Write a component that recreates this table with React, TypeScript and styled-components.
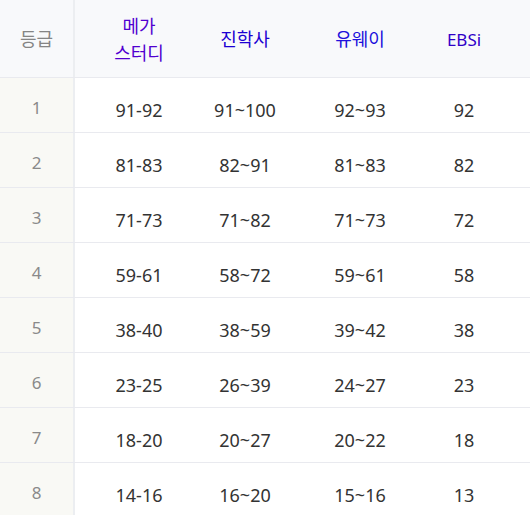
import React from 'react';
import styled, { createGlobalStyle } from 'styled-components';

const GlobalStyle = createGlobalStyle`
  html, body {
    margin: 0;
    padding: 0;
    background: #ffffff;
  }
  body {
    font-family: "Noto Sans", "Noto Sans CJK KR", sans-serif;
    overflow: hidden;
  }
`;

type Source = { name: string[]; color: string; size?: number };

const sources: Source[] = [
  { name: ['메가', '스터디'], color: '#5000d0' },
  { name: ['진학사'], color: '#1c00d2' },
  { name: ['유웨이'], color: '#2010dc' },
  { name: ['EBSi'], color: '#3000c8', size: 17 },
];

const rows: string[][] = [
  ['91-92', '91~100', '92~93', '92'],
  ['81-83', '82~91', '81~83', '82'],
  ['71-73', '71~82', '71~73', '72'],
  ['59-61', '58~72', '59~61', '58'],
  ['38-40', '38~59', '39~42', '38'],
  ['23-25', '26~39', '24~27', '23'],
  ['18-20', '20~27', '20~22', '18'],
  ['14-16', '16~20', '15~16', '13'],
];

const App = () => {
  return (
    <>
      <GlobalStyle />
      <Table>
        <HeadRow>
          <GradeHead>등급</GradeHead>
          {sources.map((s) => (
            <SourceHead key={s.name.join('')} $color={s.color} $size={s.size}>
              {s.name.map((line) => (
                <span key={line}>{line}</span>
              ))}
            </SourceHead>
          ))}
          <Filler />
        </HeadRow>
        {rows.map((cells, i) => (
          <BodyRow key={i}>
            <GradeCell>
              <span>{i + 1}</span>
            </GradeCell>
            {cells.map((c, j) => (
              <ValueCell key={j}>{c}</ValueCell>
            ))}
            <Filler />
          </BodyRow>
        ))}
      </Table>
    </>
  );
};

const Table = styled.div`
  width: 530px;
  display: flex;
  flex-direction: column;
`;

const columns = '75px 128px 84px 146px 62px 1fr';

const HeadRow = styled.div`
  display: grid;
  grid-template-columns: ${columns};
  height: 78px;
  background: #f8f9fb;
  border-bottom: 1px solid #e9eaef;
  box-sizing: border-box;
`;

const BodyRow = styled.div`
  display: grid;
  grid-template-columns: ${columns};
  height: 55px;
  border-bottom: 1px solid #e9eaef;
  box-sizing: border-box;
`;

const GradeHead = styled.div`
  display: flex;
  align-items: center;
  justify-content: center;
  font-family: "Noto Sans CJK KR", sans-serif;
  font-size: 18px;
  color: #858585;
  border-right: 2px solid #eceef1;
  padding-bottom: 2px;
`;

const SourceHead = styled.div<{ $color: string; $size?: number }>`
  display: flex;
  flex-direction: column;
  align-items: center;
  justify-content: center;
  font-family: "Noto Sans", "Noto Sans CJK KR", sans-serif;
  font-size: ${(p) => p.$size ?? 18}px;
  line-height: 27px;
  color: ${(p) => p.$color};
  padding-top: 2px;
`;

const GradeCell = styled.div`
  display: flex;
  align-items: center;
  justify-content: center;
  background: #f9f9f5;
  border-right: 2px solid #eceef1;
  font-size: 17px;
  color: #8a8a8a;
  padding-top: 4px;
`;

const ValueCell = styled.div`
  display: flex;
  align-items: center;
  justify-content: center;
  font-size: 18px;
  color: #333333;
  padding-top: 10px;
`;

const Filler = styled.div``;

export default App;
